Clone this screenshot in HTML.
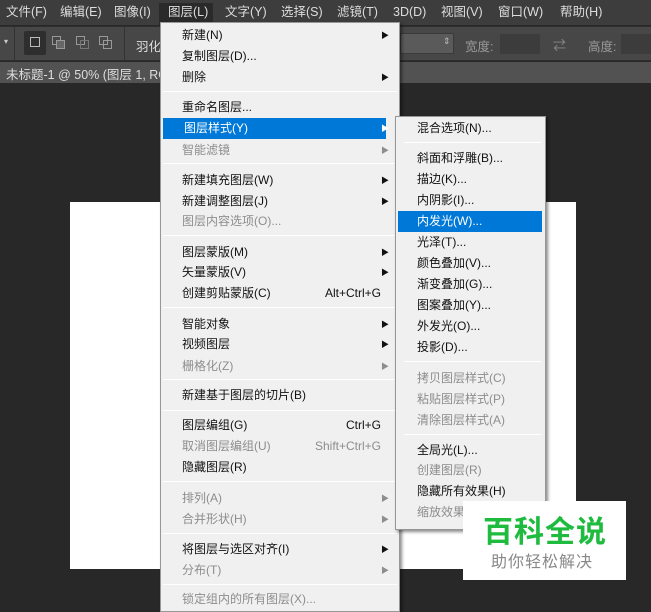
<!DOCTYPE html>
<html><head><meta charset="utf-8"><style>
*{margin:0;padding:0;box-sizing:border-box}
body{width:651px;height:605px;overflow:hidden;background:#282828;position:relative;font-family:"Liberation Sans","Microsoft YaHei","Noto Sans CJK SC",sans-serif;font-size:12px}
.a{position:absolute;white-space:nowrap}
#mb{left:0;top:0;width:651px;height:25px;background:#3d3d3d;color:#ddd}
#mb span{position:absolute;top:4px;font-size:12.5px;line-height:17px}
#tb{left:0;top:26px;width:651px;height:35px;background:#474747;border-top:1px solid #2e2e2e;border-bottom:1px solid #2e2e2e}
#tab{left:0;top:62px;width:651px;height:21px;background:#525252;color:#ddd;font-size:12.5px;padding:2px 6px}
#cv{left:70px;top:202px;width:506px;height:367px;background:#fff}
.menu{background:#f0f0f0;border:1px solid #979797;box-shadow:2px 2px 3px rgba(0,0,0,.45)}
.it{position:absolute;left:0;right:0;height:21px;line-height:21px;color:#111;font-size:12px}
.it.d{color:#8d8d8d}
.it.h{background:#0078d7;color:#fff}
.sep{position:absolute;height:1px;background:#bdbdbd;border-bottom:1px solid #fff}
.ar{position:absolute;right:10px;top:0;font-size:8px}
.sc{position:absolute;right:18px;top:0}
</style></head><body>
<div class="a" id="mb">
<span style="left:6px">文件(F)</span><span style="left:60px">编辑(E)</span><span style="left:114px">图像(I)</span>
<div style="position:absolute;left:159px;top:3px;width:54px;height:22px;background:#2a2a2a"></div>
<span style="left:168px">图层(L)</span><span style="left:225px">文字(Y)</span><span style="left:281px">选择(S)</span><span style="left:337px">滤镜(T)</span><span style="left:393px">3D(D)</span><span style="left:441px">视图(V)</span><span style="left:498px">窗口(W)</span><span style="left:560px">帮助(H)</span>
</div>
<div class="a" id="tb">
<span class="a" style="left:4px;top:10px;color:#ccc;font-size:8px">▾</span>
<div class="a" style="left:14px;top:0;width:1px;height:33px;background:#333"></div>
<div class="a" style="left:24px;top:4px;width:22px;height:24px;background:#2e2e2e;border-radius:2px"></div>
<div class="a" style="left:30px;top:10px;width:10px;height:10px;border:1px solid #bbb"></div>
<div class="a" style="left:52px;top:9px;width:9px;height:9px;border:1px solid #999"></div><div class="a" style="left:56px;top:13px;width:9px;height:9px;border:1px solid #999;background:#666"></div>
<div class="a" style="left:76px;top:9px;width:9px;height:9px;border:1px solid #999"></div><div class="a" style="left:80px;top:13px;width:9px;height:9px;border:1px solid #777"></div>
<div class="a" style="left:99px;top:9px;width:9px;height:9px;border:1px solid #999"></div><div class="a" style="left:103px;top:13px;width:9px;height:9px;border:1px solid #999"></div>
<div class="a" style="left:124px;top:0;width:1px;height:33px;background:#333"></div>
<span class="a" style="left:136px;top:9px;color:#ddd;font-size:12.5px">羽化</span>
<div class="a" style="left:400px;top:6px;width:54px;height:21px;background:#5a5a5a;border:1px solid #3a3a3a"></div>
<span class="a" style="left:443px;top:9px;color:#bbb;font-size:9px">⇕</span>
<span class="a" style="left:465px;top:9px;color:#999;font-size:12.5px">宽度:</span>
<div class="a" style="left:500px;top:7px;width:40px;height:20px;background:#3c3c3c"></div>
<span class="a" style="left:553px;top:8px;color:#888;font-size:13px">⇄</span>
<span class="a" style="left:588px;top:9px;color:#999;font-size:12.5px">高度:</span>
<div class="a" style="left:621px;top:7px;width:32px;height:20px;background:#3c3c3c"></div>
</div>
<div class="a" id="tab">未标题-1 @ 50% (图层 1, RGB/8)</div>
<div class="a" id="cv"></div>

<div class="a menu" style="left:160px;top:22px;width:240px;height:590px">
<div class="it" style="top:2px;padding-left:21px">新建(N)<span class="ar">▶</span></div>
<div class="it" style="top:23px;padding-left:21px">复制图层(D)...</div>
<div class="it" style="top:44px;padding-left:21px">删除<span class="ar">▶</span></div>
<div class="sep" style="top:68px;left:2px;right:2px"></div>
<div class="it" style="top:74px;padding-left:21px">重命名图层...</div>
<div class="it h" style="top:95px;padding-left:21px;left:2px;right:13px">图层样式(Y)<span class="ar" style="right:-3px">▶</span></div>
<div class="it d" style="top:117px;padding-left:21px">智能滤镜<span class="ar">▶</span></div>
<div class="sep" style="top:140px;left:2px;right:2px"></div>
<div class="it" style="top:147px;padding-left:21px">新建填充图层(W)<span class="ar">▶</span></div>
<div class="it" style="top:168px;padding-left:21px">新建调整图层(J)<span class="ar">▶</span></div>
<div class="it d" style="top:188px;padding-left:21px">图层内容选项(O)...</div>
<div class="sep" style="top:212px;left:2px;right:2px"></div>
<div class="it" style="top:219px;padding-left:21px">图层蒙版(M)<span class="ar">▶</span></div>
<div class="it" style="top:239px;padding-left:21px">矢量蒙版(V)<span class="ar">▶</span></div>
<div class="it" style="top:260px;padding-left:21px">创建剪贴蒙版(C)<span class="sc">Alt+Ctrl+G</span></div>
<div class="sep" style="top:284px;left:2px;right:2px"></div>
<div class="it" style="top:291px;padding-left:21px">智能对象<span class="ar">▶</span></div>
<div class="it" style="top:311px;padding-left:21px">视频图层<span class="ar">▶</span></div>
<div class="it d" style="top:333px;padding-left:21px">栅格化(Z)<span class="ar">▶</span></div>
<div class="sep" style="top:356px;left:2px;right:2px"></div>
<div class="it" style="top:362px;padding-left:21px">新建基于图层的切片(B)</div>
<div class="sep" style="top:387px;left:2px;right:2px"></div>
<div class="it" style="top:392px;padding-left:21px">图层编组(G)<span class="sc">Ctrl+G</span></div>
<div class="it d" style="top:413px;padding-left:21px">取消图层编组(U)<span class="sc">Shift+Ctrl+G</span></div>
<div class="it" style="top:434px;padding-left:21px">隐藏图层(R)</div>
<div class="sep" style="top:458px;left:2px;right:2px"></div>
<div class="it d" style="top:465px;padding-left:21px">排列(A)<span class="ar">▶</span></div>
<div class="it d" style="top:486px;padding-left:21px">合并形状(H)<span class="ar">▶</span></div>
<div class="sep" style="top:510px;left:2px;right:2px"></div>
<div class="it" style="top:516px;padding-left:21px">将图层与选区对齐(I)<span class="ar">▶</span></div>
<div class="it d" style="top:537px;padding-left:21px">分布(T)<span class="ar">▶</span></div>
<div class="sep" style="top:561px;left:2px;right:2px"></div>
<div class="it d" style="top:566px;padding-left:21px">锁定组内的所有图层(X)...</div>
</div>

<div class="a menu" style="left:395px;top:116px;width:151px;height:414px">
<div class="it" style="top:1px;padding-left:21px">混合选项(N)...</div>
<div class="sep" style="top:25px;left:8px;right:4px"></div>
<div class="it" style="top:31px;padding-left:21px">斜面和浮雕(B)...</div>
<div class="it" style="top:52px;padding-left:21px">描边(K)...</div>
<div class="it" style="top:73px;padding-left:21px">内阴影(I)...</div>
<div class="it h" style="top:94px;left:2px;right:3px;padding-left:19px">内发光(W)...</div>
<div class="it" style="top:115px;padding-left:21px">光泽(T)...</div>
<div class="it" style="top:136px;padding-left:21px">颜色叠加(V)...</div>
<div class="it" style="top:157px;padding-left:21px">渐变叠加(G)...</div>
<div class="it" style="top:178px;padding-left:21px">图案叠加(Y)...</div>
<div class="it" style="top:199px;padding-left:21px">外发光(O)...</div>
<div class="it" style="top:220px;padding-left:21px">投影(D)...</div>
<div class="sep" style="top:244px;left:8px;right:4px"></div>
<div class="it d" style="top:251px;padding-left:21px">拷贝图层样式(C)</div>
<div class="it d" style="top:272px;padding-left:21px">粘贴图层样式(P)</div>
<div class="it d" style="top:293px;padding-left:21px">清除图层样式(A)</div>
<div class="sep" style="top:317px;left:8px;right:4px"></div>
<div class="it" style="top:323px;padding-left:21px">全局光(L)...</div>
<div class="it d" style="top:343px;padding-left:21px">创建图层(R)</div>
<div class="it" style="top:364px;padding-left:21px">隐藏所有效果(H)</div>
<div class="it d" style="top:385px;padding-left:21px">缩放效果...</div>
</div>

<div class="a" style="left:463px;top:501px;width:163px;height:79px;background:#fff">
<div class="a" style="left:20px;top:10px;font-size:30px;font-weight:bold;color:#1fbb3f;letter-spacing:1px;font-family:'Noto Sans CJK SC',sans-serif;line-height:36px">百科全说</div>
<div class="a" style="left:28px;top:48px;font-size:16px;color:#888;letter-spacing:1px;font-family:'Noto Sans CJK SC',sans-serif;line-height:22px">助你轻松解决</div>
</div>
</body></html>
